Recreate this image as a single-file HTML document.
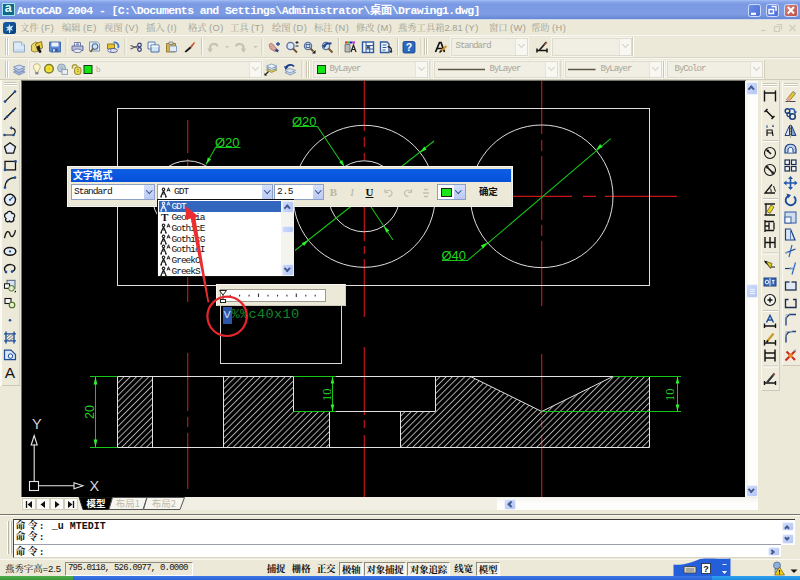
<!DOCTYPE html>
<html lang="zh">
<head>
<meta charset="utf-8">
<title>AutoCAD 2004</title>
<style>
*{box-sizing:border-box;margin:0;padding:0}
html,body{width:800px;height:580px;overflow:hidden;background:#ece9d8}
body{position:relative;font-family:"Liberation Mono","Noto Sans CJK SC",monospace;font-size:11px;color:#000}
.abs{position:absolute}
.mono{font-family:"Liberation Mono","Noto Sans CJK SC",monospace}
.sans{font-family:"Liberation Sans","Noto Sans CJK SC",sans-serif}

#title{left:0;top:0;width:800px;height:20px;background:linear-gradient(#a5bdf3 0,#8dabec 1.5px,#7a99e2 4px,#7c9be4 9px,#7d9ce5 14px,#7190db 17px,#6484d3 19.2px,#f6f5ef 19.6px,#f6f5ef 20px)}
#title .t{left:17px;top:3.5px;color:#fff;font-weight:bold;font-size:11.5px;letter-spacing:-.6px;white-space:pre;line-height:14px}
#menu{left:0;top:20px;width:800px;height:15px;background:#ece9d8}
#menu span i{font-style:normal;margin-left:2.5px;letter-spacing:.4px}
#menu span{font-family:"Liberation Sans","Noto Serif CJK SC",sans-serif;position:absolute;top:0;color:#a3a092;font-size:9.3px;white-space:pre;line-height:15px;letter-spacing:0;top:.5px}
.combo{position:absolute;height:17.5px;background:#f1efe3;border:1px solid #dddbce;box-shadow:0 0 0 1px #f6f5ee;font-size:9px;color:#a8a598;line-height:15px;white-space:pre;letter-spacing:-1px;font-family:"Liberation Mono","Noto Sans CJK SC",monospace}
.combo i{position:absolute;right:0;top:0;width:12px;height:100%;background:#f8f7f1;border-left:1px solid #e6e4d8}
.combo i:after{content:"";position:absolute;left:3px;top:3px;width:4px;height:4px;border-right:1.3px solid #d2d0c4;border-bottom:1.3px solid #d2d0c4;transform:rotate(45deg)}

#canvas{left:20.5px;top:80px;width:725px;height:417.5px;background:#000;border-left:1px solid #77756a;border-top:1px solid #77756a}

.vsb{left:745px;top:81px;width:13px;height:416px;background:linear-gradient(90deg,#f3f2ec,#fefefd 40%,#fdfdfb)}
.sb2 .chev,.sbtn .chev{border-right-width:2.1px;border-bottom-width:2.1px;border-color:#455a92}
.sb2{position:absolute;background:linear-gradient(135deg,#d0dcfb,#b5c6f2);border:1px solid #eef2fd;border-radius:2px}

.stb{position:absolute;top:562px;height:14px;font-family:"Liberation Sans","Noto Serif CJK SC",sans-serif;font-weight:bold;font-size:9.5px;line-height:13px;color:#111;white-space:pre;text-align:center;letter-spacing:-.3px}
.stb.on{border:1px solid #8d8a7c;border-right-color:#fff;border-bottom-color:#fff;background:#f3f1e6}
.cmdl{position:absolute;left:15.5px;font-size:10px;font-weight:bold;line-height:11px;letter-spacing:0;white-space:pre;color:#111;font-family:"Liberation Mono","Noto Sans CJK SC",monospace}
.cmdl b{font-family:"Liberation Serif","Noto Serif CJK SC",serif;font-weight:bold;font-size:10px;letter-spacing:2.3px}

#dlg{left:67px;top:166px;width:446px;height:41px;background:#ece9d8;border:1px solid #f6f5ef;box-shadow:inset 0 0 0 1px #e4e1d2}
#dlg .ttl{left:3px;top:2px;width:440px;height:13px;background:linear-gradient(#0d5fe6,#0650d8)}
#dlg .ttl b{position:absolute;left:2px;top:0;color:#fff;font-size:10px;line-height:13px;font-family:"Liberation Sans","Noto Sans CJK SC",sans-serif;font-weight:bold;letter-spacing:-.2px}
.xcb{position:absolute;top:17px;height:16px;background:#fff;border:1px solid #8ba0c4;font-size:9.5px;line-height:14px;letter-spacing:-1px;white-space:pre;color:#111}
.xcb u{position:absolute;right:0;top:0;width:10px;height:14px;background:linear-gradient(#d5e0fb,#b9c9f3);border-radius:1px;text-decoration:none}
.chev{position:absolute;width:4.5px;height:4.5px;border-right:1.6px solid #3a4f8c;border-bottom:1.6px solid #3a4f8c;transform:rotate(45deg)}
.xcb u .chev{left:2.5px;top:2.5px}
#lst{left:157px;top:199px;width:137px;height:78px;background:#fff;border:1px solid #111;font-size:9.5px;letter-spacing:-1px;color:#111}
#lst .it{position:absolute;left:1px;width:122px;height:11px;line-height:11px;white-space:pre;padding-left:12.5px}
#lst .sel{background:#3267bd;color:#fff}
.sbtn{position:absolute;background:linear-gradient(90deg,#cbd8fa,#b7c8f4);border:1px solid #e8eefc;border-radius:2px}
</style>
</head>
<body>
<!-- TITLE BAR -->
<div id="title" class="abs">
<div class="abs sans" style="left:1.5px;top:3px;width:13.5px;height:12.500px;background:#0f6a88;border:1px solid #a6e2f0;color:#e8fbff;font-weight:bold;font-size:12.500px;line-height:8.500px;text-align:center">a</div>
<div class="abs t mono">AutoCAD 2004 - [C:\Documents and Settings\Administrator\桌面\Drawing1.dwg]</div>
<div class="abs" style="left:747.5px;top:3.5px;width:13.5px;height:13.5px;border-radius:2.5px;border:1px solid #cfdcf8;background:linear-gradient(135deg,#6a8de8,#4a70d6)"></div><div class="abs" style="left:765.5px;top:3.5px;width:13.5px;height:13.5px;border-radius:2.5px;border:1px solid #cfdcf8;background:linear-gradient(135deg,#6a8de8,#4a70d6)"></div><div class="abs" style="left:784px;top:3.5px;width:13.5px;height:13.5px;border-radius:2.5px;border:1px solid #cfdcf8;background:linear-gradient(135deg,#d3827a,#bd5045)"></div><svg class="abs" style="left:747px;top:2px" width="53" height="16" viewBox="0 0 53 16" fill="none" stroke="#fff"><path d="M4 11.800H9" stroke-width="2.200"/><path d="M24.500 4.500H29V9M22 7.500H26.500V11.500H22Z" stroke-width="1.400"/><path d="M40.800 5L47 11.500M47 5L40.800 11.500" stroke-width="2"/></svg>
</div>
<!-- MENU BAR -->
<div id="menu" class="abs">
<div class="abs" style="left:3px;top:1.500px;width:12.500px;height:12px;border-radius:2.500px;background:linear-gradient(135deg,#1560a8,#0a3f7c)"></div><svg class="abs" style="left:3px;top:1.500px" width="13" height="12" viewBox="0 0 13 12"><path d="M6.200 2L7.500 4.500L10.500 3.500L8.500 6.500L10 8.500L7.500 8L7 11H6L5.800 8L3 9L4.800 6.500L2.500 5L5.500 4.800Z" fill="#bfe6fb"/></svg>
<span style="left:20px">文件<i>(F)</i></span><span style="left:62px">编辑<i>(E)</i></span><span style="left:104px">视图<i>(V)</i></span><span style="left:146px">插入<i>(I)</i></span><span style="left:188px">格式<i>(O)</i></span><span style="left:230px">工具<i>(T)</i></span><span style="left:272px">绘图<i>(D)</i></span><span style="left:314px">标注<i>(N)</i></span><span style="left:356px">修改<i>(M)</i></span><span style="left:398px">燕秀工具箱2.81<i>(Y)</i></span><span style="left:489px">窗口<i>(W)</i></span><span style="left:531px">帮助<i>(H)</i></span><svg class="abs" style="left:755px;top:1px" width="45" height="13" viewBox="0 0 45 13" fill="none" stroke="#cfccbe" stroke-width="1.2"><path d="M6 9.500H10.500"/><path d="M21.500 3.500H26.500V8.500M19.500 5.500H24.500V10.500H19.500Z"/><path d="M34.500 4L40.500 10M40.500 4L34.500 10"/></svg>
</div>
<!-- HORIZONTAL TOOLBARS -->
<div class="abs" style="left:0;top:35px;width:800px;height:1px;background:#f8f7f1"></div><div class="abs" style="left:0;top:57px;width:800px;height:1px;background:#d9d6c6"></div><div class="abs" style="left:0;top:58px;width:800px;height:1px;background:#f8f7f1"></div><div class="abs" style="left:0;top:79px;width:800px;height:1px;background:#cfccbc"></div><div class="combo" style="left:450.5px;top:38px;width:77px;padding-left:4px">Standard<i></i></div><div class="combo" style="left:551.5px;top:38px;width:80px;padding-left:4px"><i></i></div><div class="combo" style="left:28.5px;top:60.5px;width:233px;padding-left:4px"><i></i></div><div class="combo" style="left:312.5px;top:60.5px;width:115px;padding-left:16px">ByLayer<i></i></div><div class="combo" style="left:433.5px;top:60.5px;width:124px;padding-left:55px">ByLayer<i></i></div><div class="combo" style="left:564.5px;top:60.5px;width:97px;padding-left:35px">ByLayer<i></i></div><div class="combo" style="left:666.5px;top:60.5px;width:96px;padding-left:7px">ByColor<i></i></div><div class="abs mono" style="left:96px;top:63px;font-size:9px;line-height:13px;color:#b4b1a3;font-family:'Liberation Serif',serif">b</div><svg class="abs" style="left:0;top:35px" width="800" height="45" viewBox="0 35 800 45">
<path d="M5.5 38v17M7.5 38v17" stroke="#c9c6b6" stroke-width="1"/><path d="M6.5 38v17M8.5 38v17" stroke="#fff" stroke-width="1"/><path d="M5.5 61v17M7.5 61v17" stroke="#c9c6b6" stroke-width="1"/><path d="M6.5 61v17M8.5 61v17" stroke="#fff" stroke-width="1"/><g transform="translate(12.5 41)"><path d="M1 1H9L12 4V11H1Z" fill="#dbeaf6" stroke="#8fa7c4" stroke-width="1"/><path d="M9 1V4H12" fill="#f4f9fd" stroke="#8fa7c4" stroke-width=".8"/><path d="M2 8H11V10.500H2Z" fill="#bcd3e8" opacity=".6"/></g><g transform="translate(30.5 41)"><path d="M1 4L5 1L8 2V10L4 11L1 10Z" fill="#e8d66a" stroke="#8e7d2c" stroke-width=".9"/><path d="M5 3L11 0.500L12 7L7 9Z" fill="#f0cf3c" stroke="#7a6a22" stroke-width=".9"/><path d="M6 6L9 4L10 9L7.500 10.500Z" fill="#222"/><circle cx="9.500" cy="10.500" r="1.400" fill="#111"/></g><g transform="translate(48.5 41)"><path d="M1 1H12V11H2L1 10Z" fill="#5b8ad6" stroke="#3a61a8" stroke-width=".9"/><rect x="3" y="1.500" width="7" height="4" fill="#eef3fb"/><rect x="3.500" y="7.500" width="6" height="3.500" fill="#3a61a8"/><rect x="4.500" y="8.200" width="1.800" height="2.300" fill="#dfe8f6"/></g><path d="M66.0 38v17" stroke="#cbc8b8" stroke-width="1"/><path d="M67.0 38v17" stroke="#fbfaf5" stroke-width="1"/><g transform="translate(71 41)"><path d="M3.500 5V1.500H9.500V5" fill="#f5f7fb" stroke="#6570a0" stroke-width=".9"/><path d="M1 5H12V9.500H1Z" fill="#b9c0dc" stroke="#555f93" stroke-width=".9"/><ellipse cx="6.500" cy="9.800" rx="4" ry="1.800" fill="#eceff8" stroke="#555f93" stroke-width=".8"/><circle cx="6.500" cy="3.500" r="1.600" fill="#8d96c2"/></g><g transform="translate(88.5 41)"><path d="M1 1H9L11 3V10H1Z" fill="#e4eef8" stroke="#6f8cb4" stroke-width=".9"/><circle cx="6.500" cy="5.500" r="2.800" fill="#cfe2f4" stroke="#4f6c98" stroke-width="1.100"/><path d="M4.500 7.500L2 11" stroke="#7a5a30" stroke-width="1.600"/></g><g transform="translate(106.5 41)"><path d="M1 3H8V8H1Z" fill="#e6c52c" stroke="#7f6d1c" stroke-width=".9"/><path d="M7 1.500C11 1 13 4 11.500 7" fill="none" stroke="#3e78c6" stroke-width="1.800"/><ellipse cx="6.500" cy="9.500" rx="4.500" ry="2" fill="#dfe4f3" stroke="#4d5a92" stroke-width=".9"/><circle cx="3" cy="9.500" r="1.500" fill="#f3f5fb" stroke="#4d5a92" stroke-width=".7"/></g><path d="M125.0 38v17" stroke="#cbc8b8" stroke-width="1"/><path d="M126.0 38v17" stroke="#fbfaf5" stroke-width="1"/><g transform="translate(129.5 41)"><path d="M1 4.500L8 7M1 8L8 5" stroke="#556" stroke-width="1.100"/><circle cx="10" cy="4" r="1.800" fill="none" stroke="#2d3a7c" stroke-width="1.200"/><circle cx="10" cy="8.500" r="1.800" fill="none" stroke="#2d3a7c" stroke-width="1.200"/></g><g transform="translate(147 41)"><path d="M1 1H8V8H1Z" fill="#eef4fa" stroke="#5b7fb4" stroke-width="1"/><path d="M4 4H12V11H4Z" fill="#d4e4f3" stroke="#4a6fa8" stroke-width="1"/><path d="M4.500 4.500H11.500V6H4.500Z" fill="#f6fafd"/></g><g transform="translate(165 41)"><path d="M1.500 2.500H10.500V11H1.500Z" fill="#d8b24c" stroke="#8e7430" stroke-width=".9"/><path d="M4 1H8V3.500H4Z" fill="#cfd3da" stroke="#777" stroke-width=".7"/><path d="M4.500 5H11.500V10.500H4.500Z" fill="#e2ecf6" stroke="#6f8cb4" stroke-width=".8"/></g><g transform="translate(183.5 41)"><path d="M1 10.500L6.500 5.500L8 7L2.500 11.500Z" fill="#1a1a1a"/><path d="M6.500 5.500L10.500 1L11.500 2L8 7Z" fill="#c9573b"/><path d="M10.500 1L11.500 2L12 0.500Z" fill="#e0a080"/></g><path d="M201.5 38v17" stroke="#cbc8b8" stroke-width="1"/><path d="M202.5 38v17" stroke="#fbfaf5" stroke-width="1"/><g transform="translate(207 41)"><path d="M3 10.500V6.500C3 2.500 9.500 1.500 10.500 5.500" fill="none" stroke="#c6c3b5" stroke-width="2.200"/><path d="M0.200 7.500H5.800L3 11.500Z" fill="#c6c3b5"/></g><g transform="translate(233.5 41)"><path d="M10 10.500V6.500C10 2.500 3.500 1.500 2.500 5.500" fill="none" stroke="#c6c3b5" stroke-width="2.200"/><path d="M7.200 7.500H12.800L10 11.500Z" fill="#c6c3b5"/></g><path d="M262.0 38v17" stroke="#cbc8b8" stroke-width="1"/><path d="M263.0 38v17" stroke="#fbfaf5" stroke-width="1"/><g transform="translate(267.5 41)"><path d="M2 5C1 3 3 1.500 5 3L9 7.500C10 9 8 11 6.500 10L3 8Z" fill="#d8a59a" stroke="#a06a62" stroke-width=".8"/><path d="M7 9.500L10 11.500L11.500 9.500L9 7.500Z" fill="#3a4a8c"/><path d="M10.500 1v4M8.500 3h4" stroke="#2d4a9a" stroke-width="1.300"/></g><g transform="translate(285.5 41)"><circle cx="5" cy="5" r="3.600" fill="#dbe9f6" stroke="#5a6f9c" stroke-width="1.300"/><path d="M7.500 7.500L11.500 11.500" stroke="#6d5230" stroke-width="1.800"/><path d="M10 1.500h3M11.500 0v3M10 5h3" stroke="#223" stroke-width="1"/></g><g transform="translate(303 41)"><circle cx="5" cy="5" r="3.600" fill="#cfe0f2" stroke="#5a6f9c" stroke-width="1.300"/><rect x="3.200" y="3.500" width="3.600" height="3" fill="none" stroke="#35507f" stroke-width=".8"/><path d="M7.500 7.500L10.500 10.500" stroke="#6d5230" stroke-width="1.800"/><path d="M12.500 9V12.500H9Z" fill="#111"/></g><g transform="translate(321 41)"><circle cx="5" cy="5" r="3.600" fill="#d8e6f4" stroke="#5a6f9c" stroke-width="1.300"/><path d="M7.500 7.500L11.500 11.500" stroke="#6d5230" stroke-width="1.800"/><path d="M3 5.500C4 2.500 8 2 10.500 2.500" fill="none" stroke="#20408c" stroke-width="1.800"/><path d="M1.500 4L5.500 4.500L3 7.500Z" fill="#20408c"/></g><path d="M338.5 38v17" stroke="#cbc8b8" stroke-width="1"/><path d="M339.5 38v17" stroke="#fbfaf5" stroke-width="1"/><g transform="translate(344 41)"><rect x="1" y="0.500" width="2.500" height="2" fill="#d22"/><rect x="3.500" y="0.500" width="2.500" height="2" fill="#2a2"/><rect x="6" y="0.500" width="2.500" height="2" fill="#22c"/><rect x="8.500" y="0.500" width="2.500" height="2" fill="#c2c"/><path d="M1 3.500H6V11H1Z" fill="#b8b8b8" stroke="#666" stroke-width=".8"/><path d="M7 11L9.500 4L12 11M8 8.500H11" fill="none" stroke="#222" stroke-width="1.200"/></g><g transform="translate(361.5 41)"><rect x="1" y="1" width="11" height="10.500" fill="#f4f8fc" stroke="#2e5a9c" stroke-width="1.400"/><path d="M4.500 1V11.500M4.500 4.500H12M4.500 8H12M8.200 4.500V11.500" stroke="#2e5a9c" stroke-width="1"/><rect x="5.200" y="5.200" width="2.400" height="2.200" fill="#345"/></g><g transform="translate(379.5 41)"><path d="M1 1H7.500L9.500 3V11.500H1Z" fill="#f2f6fb" stroke="#2e5a9c" stroke-width="1.300"/><path d="M3 4H7M3 6.500H7M3 9H6" stroke="#2e5a9c" stroke-width="1"/><path d="M8 6C10 5 12 7 12 9.500" fill="none" stroke="#223" stroke-width="1.300"/><circle cx="11.500" cy="10.500" r="1.200" fill="#223"/></g><path d="M397.5 38v17" stroke="#cbc8b8" stroke-width="1"/><path d="M398.5 38v17" stroke="#fbfaf5" stroke-width="1"/><g transform="translate(402.5 41)"><rect x="0.500" y="0.500" width="12" height="11.500" rx="1.500" fill="#2c67c0" stroke="#173f86" stroke-width=".8"/><text x="6.500" y="10" text-anchor="middle" font-family="Liberation Sans, sans-serif" font-weight="bold" font-size="10.500" fill="#fff">?</text></g><path d="M421.0 38v17" stroke="#cbc8b8" stroke-width="1"/><path d="M422.0 38v17" stroke="#fbfaf5" stroke-width="1"/><g transform="translate(225 46)"><path d="M0 0H4L2 2.200Z" fill="#c6c3b5"/></g><g transform="translate(253.5 46)"><path d="M0 0H4L2 2.200Z" fill="#c6c3b5"/></g><path d="M424.5 38v17M426.5 38v17" stroke="#c9c6b6" stroke-width="1"/><path d="M425.5 38v17M427.5 38v17" stroke="#fff" stroke-width="1"/><g transform="translate(434.5 41)"><path d="M1 11L5 1.500H6.500L10 11M3 7.500H8.500" fill="none" stroke="#111" stroke-width="1.700"/><path d="M6 10.500L12 5" stroke="#c8962c" stroke-width="1.800"/><path d="M5 11.500L7 9.500" stroke="#111" stroke-width="1.500"/></g><g transform="translate(535.5 41)"><path d="M1 9.500H12M1.500 7.500V11.500M11.500 7.500V11.500" stroke="#111" stroke-width="1.500"/><path d="M4 9L11 1" stroke="#222" stroke-width="1.800"/><path d="M8 4.500L11 1L11.800 2Z" fill="#c86c4c"/></g><path d="M632.500 37V56" stroke="#d2cfbf"/><path d="M633.500 37V56" stroke="#fff"/><g transform="translate(12.5 63.5)"><path d="M1 8.500L6.500 6.500L12.500 8.500L6.500 11.500Z" fill="#9fb2d8" stroke="#7088b8" stroke-width=".8"/><path d="M1 6L6.500 4L12.500 6L6.500 9Z" fill="#b4c4e2" stroke="#7088b8" stroke-width=".8"/><path d="M1 3.500L6.500 1.500L12.500 3.500L6.500 6.500Z" fill="#cfdaee" stroke="#7088b8" stroke-width=".8"/></g><g transform="translate(33 63.5)"><path d="M3.800 0.300C-0.400 0.300 -0.200 5 2.300 7V8.800H5.300V7C7.800 5 8 0.300 3.800 0.300Z" fill="#fdf8c4" stroke="#a8a070" stroke-width=".8"/><path d="M2.300 8.800H5.300V10.800H2.300Z" fill="#7c7a90"/></g><g transform="translate(44 63.5)"><circle cx="5" cy="5.300" r="4.300" fill="#efe53a" stroke="#7a7e2e" stroke-width="1.500"/><circle cx="5" cy="5.300" r="1.800" fill="#f2d21c"/></g><g transform="translate(57 63.5)"><circle cx="4.500" cy="4.500" r="4" fill="#c9d6e0" stroke="#8094a8" stroke-width=".9"/><path d="M4.500 1V8M1 4.500H8M2 2L7 7M7 2L2 7" stroke="#9fb2c4" stroke-width=".7"/><rect x="5" y="6" width="5.500" height="5" fill="#e9eef4" stroke="#8094a8" stroke-width=".8"/></g><g transform="translate(71 63.5)"><path d="M1.500 5V3C1.500 0.500 6 0.500 6 3" fill="none" stroke="#a89a3a" stroke-width="1.500"/><rect x="3.500" y="3.500" width="6.500" height="7.500" rx="2.500" fill="#e6d84c" stroke="#8c8030" stroke-width=".9"/><path d="M6 6H8M6 8H8" stroke="#a89a3a" stroke-width=".8"/></g><g transform="translate(83.5 65)"><rect x="0.500" y="0.500" width="8" height="8" fill="#12e612" stroke="#143c14" stroke-width="1"/></g><g transform="translate(264.5 63.5)"><path d="M2 6.500L7 4.500L12.500 6.500L7 9Z" fill="#e0cf4c" stroke="#8a7c30" stroke-width=".7"/><path d="M2 4.500L7 2.500L12.500 4.500L7 7Z" fill="#d5e1ee" stroke="#6a86b0" stroke-width=".7"/><path d="M2 2.500L7 0.500L12.500 2.500L7 5Z" fill="#e8f0f8" stroke="#6a86b0" stroke-width=".7"/><path d="M0.500 11.500L4 8" stroke="#222" stroke-width="1.300"/><path d="M0 12V9.500L2.500 12Z" fill="#111"/></g><g transform="translate(283 63.5)"><path d="M2 9L7 7L12.500 9L7 11.500Z" fill="#cfdcec" stroke="#6a86b0" stroke-width=".7"/><path d="M2 7L7 5L12.500 7L7 9.500Z" fill="#dbe6f2" stroke="#6a86b0" stroke-width=".7"/><path d="M3 4.500C4 1 9 0.500 11 3" fill="none" stroke="#1d3f8f" stroke-width="1.900"/><path d="M1 2.500L5.500 3.500L2.500 6.500Z" fill="#1d3f8f"/></g><path d="M302.0 61v17" stroke="#cbc8b8" stroke-width="1"/><path d="M303.0 61v17" stroke="#fbfaf5" stroke-width="1"/><path d="M306.5 61v17M308.5 61v17" stroke="#c9c6b6" stroke-width="1"/><path d="M307.5 61v17M309.5 61v17" stroke="#fff" stroke-width="1"/><g transform="translate(317 65)"><rect x="0.500" y="0.500" width="8" height="8" fill="#12e612" stroke="#143c14" stroke-width="1"/></g><path d="M438 69.500H485M568 69.500H595.500" stroke="#5d5543" stroke-width="1.500"/><path d="M430.0 61v17" stroke="#cbc8b8" stroke-width="1"/><path d="M431.0 61v17" stroke="#fbfaf5" stroke-width="1"/><path d="M561.0 61v17" stroke="#cbc8b8" stroke-width="1"/><path d="M562.0 61v17" stroke="#fbfaf5" stroke-width="1"/><path d="M663.5 61v17" stroke="#cbc8b8" stroke-width="1"/><path d="M664.5 61v17" stroke="#fbfaf5" stroke-width="1"/><path d="M764.500 60V79" stroke="#d2cfbf"/></svg>
<!-- DRAWING CANVAS -->
<div id="canvas" class="abs"></div>
<svg class="abs" id="dwg" style="left:0;top:0" width="800" height="580" viewBox="0 0 800 580">
<defs>
<pattern id="hatch" width="4.38" height="10" patternUnits="userSpaceOnUse" patternTransform="translate(118 376) rotate(45)"><line x1="0.5" y1="0" x2="0.5" y2="10" stroke="#dcdcdc" stroke-width="0.8"/></pattern>
<clipPath id="cv"><rect x="21.5" y="81" width="723.500" height="416.500"/></clipPath>
</defs>
<g clip-path="url(#cv)" fill="none" stroke-width="1">
<g stroke="#c9151a" stroke-width="1.15">
<path d="M187.7 120V153M187.7 159V168M187.7 277V302M187.7 353V411M187.7 417V427M187.7 433V489"/>
<path d="M364.3 80V131M364.3 137V147M364.3 153V160M364.3 207V241M364.3 246V254M364.3 259V317M364.3 347V415M364.3 420V428M364.3 435V497"/>
<path d="M541.7 80V134M541.7 140V151M541.7 156V220M541.7 225V236M541.7 241V306M541.7 354V415M541.7 420V428M541.7 435V497"/>
<path d="M436 196.3H470M478 196.3H488M494 196.3H572M583 196.3H596M605 196.3H677"/>
</g>
<g stroke="#dedede">
<rect x="117.5" y="108.5" width="532" height="177"/>
<circle cx="187.7" cy="196.3" r="35.5"/><circle cx="364.2" cy="196.3" r="35.5"/><circle cx="364.2" cy="196.3" r="71"/><circle cx="541.7" cy="196.3" r="71.3"/>
</g>
<g fill="url(#hatch)" stroke="none">
<rect x="117" y="377" width="35" height="70"/>
<path d="M223 377H293.500V411.500H329V447H223Z"/>
<path d="M400 447V411.500H435.500V377H470.500L541.700 411.500L613 377H649V447Z"/>
</g>
<g stroke="#e2e2e2">
<path d="M117.500 376.500H649.500V447.500H117.500Z"/>
<path d="M152.500 376.500V447.500M223.500 376.500V447.500"/>
<path d="M293.500 376.500V411.500H435.500V376.500M329.500 411.500V447.500M400.500 411.500V447.500"/>
<path d="M470.500 376.500L541.700 411.500L613 376.500"/>
</g>
<g stroke="#19c419" stroke-width="1.05">
<path d="M90 376.500H117M90 447.500H117M95.500 376.500V447.500"/>
<path d="M293.500 376.500H336M293.500 411.500H336M332.500 376.500V411.500"/>
<path d="M613 376.500H681M541.700 411.500H681M677.500 376.500V411.500"/>
<path d="M215.500 147.500H240.500M215.500 147.500L206 164.500"/>
<path d="M292.500 126.500H317.500L393 240"/>
<path d="M295 250.500L434 141"/>
<path d="M442 260.500H467.500L610.700 138.600"/>
</g>
<g fill="#2cf02c" stroke="none">
<path d="M95.500 376.500l-1.800 8h3.600zM95.500 447.500l-1.800 -8h3.600z"/>
<path d="M332.500 376.500l-1.800 7h3.600zM332.500 411.500l-1.800 -7h3.600z"/>
<path d="M677.500 376.500l-1.800 7h3.600zM677.500 411.500l-1.800 -7h3.600z"/>
<path d="M344.5 166.7L342.2 159.9L339.1 162.0ZM383.9 225.9L386.2 232.7L389.3 230.6ZM308.4 240.2L301.8 243.1L304.1 246.1ZM420.0 152.4L426.6 149.5L424.3 146.5ZM487.4 242.5L480.8 245.6L483.3 248.5ZM596.0 150.1L602.6 147.0L600.1 144.1ZM206.0 164.5L211.1 159.3L207.8 157.5Z"/>
</g>
<g fill="#1fd51f" stroke="none" font-family="Liberation Sans, sans-serif" font-size="13">
<text x="215" y="146.500">Ø20</text>
<text x="292" y="125.500">Ø20</text>
<text x="441.500" y="259.500">Ø40</text>
<text transform="translate(94 419) rotate(-90)" font-size="12.5">20</text>
<text transform="translate(331 401) rotate(-90)" font-family="Liberation Serif, serif" font-size="12.5">10</text>
<text transform="translate(674 401) rotate(-90)" font-family="Liberation Serif, serif" font-size="12.5">10</text>
</g>
</g>
<g stroke="#e6e6e6" fill="none" stroke-width="1.1">
<rect x="29.5" y="481.500" width="9" height="9"/>
<path d="M34.200 481.500V444.500M38.500 485.800H74"/>
<path d="M34.200 435.500L31.200 445H37.200Z"/>
<path d="M83 485.800L74 482.800V488.800Z"/>
</g>
<g fill="#d6d6d6" font-family="Liberation Sans, sans-serif" font-size="14.5">
<text x="32" y="429.300">Y</text>
<text x="89.500" y="490.800">X</text>
</g>
</svg>
<!-- LEFT DRAW TOOLBAR -->
<div class="abs" style="left:0;top:80px;width:21px;height:430px;background:#ece9d8"></div><div class="abs" style="left:0;top:80px;width:2px;height:306px;background:#faf9f4"></div><div class="abs" style="left:19px;top:81px;width:1px;height:304px;background:#d6d3c3"></div><div class="abs" style="left:2px;top:385px;width:18px;height:1px;background:#cbc8b8"></div><svg class="abs" style="left:0;top:80px" width="21" height="310" viewBox="0 80 21 310">
<path d="M4 82.5h13M4 84.5h13" stroke="#c9c6b6"/><path d="M4 83.5h13M4 85.5h13" stroke="#fff"/><g transform="translate(3.0 89.6)"><path d="M2 12L12 2" stroke="#141414" stroke-width="1.300"/><circle cx="2" cy="12" r="1.300" fill="#1d4f9c"/><circle cx="12" cy="2" r="1.300" fill="#1d4f9c"/></g><g transform="translate(3.0 106.8)"><path d="M1 13L13 1" stroke="#141414" stroke-width="1.500"/><circle cx="4" cy="10" r="1.300" fill="#1d4f9c"/><circle cx="10" cy="4" r="1.300" fill="#1d4f9c"/></g><g transform="translate(3.0 124.0)"><path d="M1.500 11H10.500C13 9 13 5 9 4" fill="none" stroke="#141414" stroke-width="1.200"/><circle cx="1.500" cy="11" r="1.300" fill="#1d4f9c"/><circle cx="10.500" cy="11" r="1.300" fill="#1d4f9c"/><path d="M9 2V6L6.500 4Z" fill="#1d4f9c"/></g><g transform="translate(3.0 141.2)"><path d="M7 1.500L12.500 5.500L10.500 12H3.500L1.500 5.500Z" fill="#e8eef8" stroke="#141414" stroke-width="1.300"/></g><g transform="translate(3.0 158.4)"><rect x="2" y="3" width="10.500" height="8.500" fill="none" stroke="#141414" stroke-width="1.300"/><circle cx="2" cy="11.500" r="1.300" fill="#1d4f9c"/><circle cx="12.500" cy="3" r="1.300" fill="#1d4f9c"/></g><g transform="translate(3.0 175.6)"><path d="M2 12C2 6 6 2 12 2" fill="none" stroke="#141414" stroke-width="1.300"/><circle cx="2" cy="12" r="1.300" fill="#1d4f9c"/><circle cx="12" cy="2" r="1.300" fill="#1d4f9c"/><circle cx="4.500" cy="5" r="1.100" fill="#1d4f9c"/></g><g transform="translate(3.0 192.8)"><circle cx="7" cy="7" r="5.500" fill="#e4ecf6" stroke="#141414" stroke-width="1.400"/><path d="M7 7L10.500 3.500" stroke="#1d4f9c" stroke-width="1.200"/><circle cx="7" cy="7" r="1.100" fill="#1d4f9c"/></g><g transform="translate(3.0 210.0)"><path d="M4 3C5 0.500 9 1 9 3.500C12 3 12.500 7 10.500 8C12 11 8 13 6.500 11C4 13 1.500 10.500 3 8.500C0.500 7 1.500 3 4 3Z" fill="#e6edf6" stroke="#141414" stroke-width="1.300"/></g><g transform="translate(3.0 227.2)"><path d="M1.500 11C3 3 6 3 7 7C8 11 11 10 12.500 3" fill="none" stroke="#141414" stroke-width="1.300"/></g><g transform="translate(3.0 244.4)"><ellipse cx="7" cy="7" rx="5.800" ry="3.800" fill="#e4ecf6" stroke="#141414" stroke-width="1.500"/><circle cx="7" cy="7" r="1.100" fill="#1d4f9c"/></g><g transform="translate(3.0 261.6)"><path d="M3 10.500C-1 6 4 2.500 8 3C13 3.500 13 9 9 10" fill="none" stroke="#141414" stroke-width="1.400"/><circle cx="3" cy="10.500" r="1.300" fill="#1d4f9c"/><circle cx="9" cy="10" r="1.300" fill="#1d4f9c"/></g><g transform="translate(3.0 278.8)"><rect x="4" y="1.500" width="8" height="8" fill="#d6e2f2" stroke="#456" stroke-width=".9"/><rect x="1.500" y="5" width="5" height="4.500" fill="#f4f7fb" stroke="#141414" stroke-width="1"/><circle cx="8.500" cy="9.500" r="2.800" fill="#e4ecd0" stroke="#4a6a1c" stroke-width="1"/><path d="M13 11.500V13.500H11Z" fill="#141414"/></g><g transform="translate(3.0 296.0)"><rect x="2" y="2.500" width="6" height="5" fill="#f4f7fb" stroke="#141414" stroke-width="1.100"/><circle cx="9" cy="9" r="2.800" fill="#e4ecd0" stroke="#4a6a1c" stroke-width="1.100"/></g><g transform="translate(3.0 313.2)"><circle cx="7" cy="7" r="1.300" fill="#1d4f9c"/></g><g transform="translate(3.0 330.4)"><path d="M3 1V13M11 1V13M1 3.500H13M1 10.500H13" stroke="#1d4f9c" stroke-width="1.400"/><path d="M4 9.500L10 4.500M4 6.500L7 4M7 10L10 7.500" stroke="#456" stroke-width=".7"/></g><g transform="translate(3.0 347.6)"><path d="M1.500 2.500H8L12.500 7V12H1.500Z" fill="#dbe5f3" stroke="#1d4f9c" stroke-width="1.200"/><circle cx="7.500" cy="8.500" r="2.200" fill="#f6f8fb" stroke="#1d4f9c" stroke-width="1"/></g><g transform="translate(3.0 364.8)"><text x="7" y="13" text-anchor="middle" font-family="Liberation Sans, sans-serif" font-size="15.500" fill="#141414">A</text></g></svg>
<!-- VERTICAL SCROLLBAR -->
<div class="abs vsb"></div>
<div class="sb2" style="left:745.5px;top:82px;width:12px;height:12.500px"><div class="chev" style="left:2.700px;top:4px;transform:rotate(-135deg)"></div></div><div class="sb2" style="left:745.5px;top:484.500px;width:12px;height:12px"><div class="chev" style="left:2.700px;top:1px"></div></div><div class="sb2" style="left:745.5px;top:283.500px;width:12px;height:14px"><div class="abs" style="left:3px;top:4px;width:5px;height:5px;border-top:1px solid #eef3ff;border-bottom:1px solid #eef3ff"><div class="abs" style="left:0;top:1px;width:5px;height:1px;background:#eef3ff"></div></div></div>
<!-- RIGHT TOOLBARS (DIMENSION / MODIFY) -->
<div class="abs" style="left:758px;top:80px;width:42px;height:430px;background:#ece9d8"></div><div class="abs" style="left:761px;top:81px;width:19px;height:310px;background:#efecdd;border-left:1px solid #faf9f4;border-right:1px solid #d2cfbf;border-bottom:1px solid #cbc8b8"></div><div class="abs" style="left:781.500px;top:81px;width:19px;height:285px;background:#efecdd;border-left:1px solid #faf9f4;border-bottom:1px solid #cbc8b8"></div><svg class="abs" style="left:758px;top:80px" width="42" height="315" viewBox="758 80 42 315">
<path d="M763 83.5h14M763 85.5h14" stroke="#c9c6b6"/><path d="M763 84.5h14M763 86.5h14" stroke="#fff"/><path d="M784 83.5h14M784 85.5h14" stroke="#c9c6b6"/><path d="M784 84.5h14M784 86.5h14" stroke="#fff"/><g transform="translate(763.0 89.5)"><path d="M1.500 1V12M12.500 1V12M1.500 3.500H12.500" stroke="#141414" stroke-width="1.400"/></g><g transform="translate(763.0 106.5)"><path d="M3 4L10 11M1.500 5.500L4.500 2.500M8.500 12.500L11.500 9.500" stroke="#141414" stroke-width="1.500"/></g><g transform="translate(763.0 124.0)"><path d="M4 12V6H9L10 12M4 9H9" fill="none" stroke="#141414" stroke-width="1.200"/><path d="M3 3H5M9 2.500H11" stroke="#456" stroke-width="1.200"/><circle cx="4" cy="2" r=".9" fill="#7a8fc0"/><circle cx="10" cy="1.500" r=".9" fill="#7a8fc0"/></g><path d="M763 140.5h15" stroke="#c9c6b6"/><path d="M763 141.5h15" stroke="#fff"/><g transform="translate(763.0 146.0)"><circle cx="7" cy="7" r="5.500" fill="none" stroke="#141414" stroke-width="1.100"/><path d="M8 8L4.500 4.500" stroke="#141414" stroke-width="1.500"/><path d="M3 3L6.200 4L4 6.200Z" fill="#141414"/></g><g transform="translate(763.0 163.0)"><circle cx="7" cy="7" r="5.500" fill="none" stroke="#141414" stroke-width="1.100"/><path d="M4 4L10 10" stroke="#141414" stroke-width="1.600"/><path d="M2.800 2.800L6 3.800L3.800 6ZM11.200 11.200L8 10.200L10.200 8Z" fill="#141414"/></g><g transform="translate(763.0 181.5)"><path d="M12 11.500H2L9 3" fill="none" stroke="#141414" stroke-width="1.300"/><path d="M8 11C8.500 9 8 7.500 6.500 6.500" fill="none" stroke="#141414" stroke-width="1"/><path d="M10.500 4.500L12.500 10" stroke="#141414" stroke-width="1"/></g><path d="M763 198.5h15" stroke="#c9c6b6"/><path d="M763 199.5h15" stroke="#fff"/><g transform="translate(763.0 202.5)"><path d="M1.500 1.500H12M1.500 12.500H12M3 1.500V12.500" stroke="#141414" stroke-width="1.300"/><path d="M4 9L8 2.500L11 4.500L7 11Z" fill="#e6d42c" stroke="#6d641c" stroke-width=".8"/></g><g transform="translate(763.0 219.0)"><path d="M2 1V13M6 3.500V10.500M11 3.500V10.500M2 2.500H11M2 7H6M2 11.500H11" stroke="#141414" stroke-width="1.300"/></g><g transform="translate(763.0 235.5)"><path d="M2 1.500V12.500M7 1.500V12.500M12 1.500V12.500M2 7H12" stroke="#141414" stroke-width="1.400"/></g><path d="M763 253.0h15" stroke="#c9c6b6"/><path d="M763 254.0h15" stroke="#fff"/><g transform="translate(763.0 258.5)"><path d="M2 3L7 8.500H12" fill="none" stroke="#141414" stroke-width="1.200"/><path d="M3 3L9 5L7.500 10Z" fill="#e0cf28" stroke="#5d5618" stroke-width=".8"/><path d="M1 2L4.500 3L2.500 5Z" fill="#141414"/></g><g transform="translate(763.0 275.5)"><rect x="1" y="2.500" width="12" height="8" fill="#3c6cb8" stroke="#1c3f80" stroke-width="1"/><path d="M7 2.500V10.500" stroke="#dfe8f6" stroke-width="1"/><circle cx="4" cy="6.500" r="1.800" fill="none" stroke="#fff" stroke-width=".9"/><path d="M9 5H11.500M10.200 5V8.500" stroke="#fff" stroke-width=".9"/></g><g transform="translate(763.0 293.0)"><circle cx="7" cy="7" r="5.500" fill="#f4f4ee" stroke="#141414" stroke-width="1.200"/><path d="M4.500 7H9.500M7 4.500V9.500" stroke="#141414" stroke-width="1.500"/></g><path d="M763 310.5h15" stroke="#c9c6b6"/><path d="M763 311.5h15" stroke="#fff"/><g transform="translate(763.0 314.5)"><path d="M1.500 9V13.500M12.500 9V13.500M1.500 11.500H12.500" stroke="#141414" stroke-width="1.400"/><path d="M3.500 8L7 1L10.500 8M5 5.500H9" fill="none" stroke="#1d4f9c" stroke-width="1.500"/></g><g transform="translate(763.0 332.0)"><path d="M1.500 8V13.500M12.500 8V13.500M1.500 11H12.500" stroke="#141414" stroke-width="1.400"/><path d="M4 9.500L10.500 1.500" stroke="#c89a2c" stroke-width="2.200"/><path d="M3.500 10.500L5 8.500" stroke="#141414" stroke-width="1.500"/></g><g transform="translate(763.0 348.5)"><path d="M2 1V13M12 1V13M2 4.500H12M2 9.500H12" stroke="#141414" stroke-width="1.500"/></g><path d="M763 366.0h15" stroke="#c9c6b6"/><path d="M763 367.0h15" stroke="#fff"/><g transform="translate(763.0 372.0)"><path d="M1 11H13M1.500 9V13M12.500 9V13" stroke="#141414" stroke-width="1.400"/><path d="M4 10.500L11.500 1.500" stroke="#333" stroke-width="2"/><path d="M9.500 4L11.500 1.500L12.300 2.500Z" fill="#c8745c"/></g><g transform="translate(783.5 89.5)"><path d="M2 12H12" stroke="#445" stroke-width="1"/><path d="M3 10L9.500 2L12 4L5.500 12Z" fill="#e6c62c" stroke="#77651c" stroke-width=".7"/><path d="M3 10L5 7.500L7.500 9.500L5.500 12Z" fill="#e8a0a8"/><path d="M9.500 2L12 4" stroke="#8fa0c8" stroke-width="1.500"/></g><g transform="translate(783.5 106.5)"><circle cx="4" cy="4.500" r="2.300" fill="none" stroke="#1c3f80" stroke-width="1.500"/><circle cx="9" cy="10" r="2.800" fill="none" stroke="#1c3f80" stroke-width="1.600"/><circle cx="5.300" cy="8.300" r="1.800" fill="none" stroke="#1c3f80" stroke-width="1.300"/><path d="M6.500 2.500C9.500 1.500 11.500 3 11.500 5.500" fill="none" stroke="#2458b0" stroke-width="1.500"/><path d="M9.800 5H13.500L11.700 7.800Z" fill="#2458b0"/></g><g transform="translate(783.5 124.0)"><path d="M6 1.500V11.500H1.500Z" fill="#dfe8f4" stroke="#1c3f80" stroke-width="1"/><path d="M8 1.500V11.500H12.500Z" fill="#7f9fd0" stroke="#1c3f80" stroke-width="1"/><path d="M7 0.500V13.500" stroke="#333" stroke-width=".7" stroke-dasharray="2 1"/></g><g transform="translate(783.5 141.5)"><path d="M1.500 11.500V8C1.500 1 12.500 1 12.500 8V11.500Z" fill="#bcd0ea" stroke="#1c3f80" stroke-width="1.200"/><path d="M4.500 11V8.500C4.500 5 9.500 5 9.500 8.500V11" fill="#eef3fa" stroke="#1c3f80" stroke-width="1"/></g><g transform="translate(783.5 158.5)"><rect x="1.500" y="1.500" width="4.500" height="4.500" fill="#f2f5fa" stroke="#1c2f50" stroke-width="1.200"/><rect x="8" y="1.500" width="4.500" height="4.500" fill="#f2f5fa" stroke="#1c2f50" stroke-width="1.200"/><rect x="1.500" y="8" width="4.500" height="4.500" fill="#f2f5fa" stroke="#1c2f50" stroke-width="1.200"/><rect x="8" y="8" width="4.500" height="4.500" fill="#f2f5fa" stroke="#1c2f50" stroke-width="1.200"/></g><g transform="translate(783.5 176.0)"><path d="M7 1V13M1 7H13" stroke="#2458b0" stroke-width="1.600"/><path d="M7 0L9.500 3H4.500ZM7 14L9.500 11H4.500ZM0 7L3 4.500V9.500ZM14 7L11 4.500V9.500Z" fill="#2458b0"/></g><g transform="translate(783.5 193.0)"><path d="M10.500 3.500A5 5 0 1 1 4.500 3" fill="none" stroke="#1c4a9c" stroke-width="1.900"/><path d="M3 0.500L7.500 2L4.500 5.500Z" fill="#1c4a9c"/></g><g transform="translate(783.5 210.5)"><rect x="1.500" y="1.500" width="11" height="11" fill="#cfdcee" stroke="#3c64a8" stroke-width="1.100"/><rect x="1.500" y="6.500" width="6" height="6" fill="#f2f6fb" stroke="#3c64a8" stroke-width="1"/></g><g transform="translate(783.5 227.5)"><path d="M2 1.500H7L11.500 12.500H2Z" fill="#dce6f3" stroke="#1c3f80" stroke-width="1.200"/><path d="M7 1.500V12.500" stroke="#5f83bc" stroke-width="1"/></g><g transform="translate(783.5 244.0)"><path d="M2 9L12 5" stroke="#1c3f80" stroke-width="1.200"/><path d="M8.500 1L5.500 13" stroke="#2c66c0" stroke-width="1.200"/><path d="M2 9L5 8" stroke="#7a9ad0" stroke-width="1.600"/></g><g transform="translate(783.5 261.5)"><path d="M1.500 7H9.500" stroke="#1c3f80" stroke-width="1.200"/><path d="M12 1L8.500 13" stroke="#2c66c0" stroke-width="1.200"/><path d="M6 7H9.500" stroke="#7a9ad0" stroke-width="1.600"/></g><g transform="translate(783.5 278.5)"><rect x="2" y="3.500" width="10.500" height="8" fill="#dfe8f4" stroke="#1c2f50" stroke-width="1.300"/><path d="M6 3.500H8" stroke="#ece9d8" stroke-width="2"/></g><g transform="translate(783.5 296.0)"><path d="M5 3.500H2V11.500H12.500V3.500H9.500" fill="none" stroke="#1c2f50" stroke-width="1.400"/></g><g transform="translate(783.5 312.5)"><path d="M2.500 13V5.500L6 2H12.500" fill="none" stroke="#1c3f80" stroke-width="1.300"/><path d="M2.500 5.500V2H6" fill="none" stroke="#9ab" stroke-width=".8"/></g><g transform="translate(783.5 329.5)"><path d="M2.500 13V8C2.500 4 5 2 9 2H12.500" fill="none" stroke="#1c3f80" stroke-width="1.400"/><path d="M2.500 8V2H9" fill="none" stroke="#9ab" stroke-width=".8"/></g><g transform="translate(783.5 348.5)"><path d="M2 12L6 8M8 6L12 2M3 3L6 6M8.500 8.500L11.500 11.500" stroke="#c8281c" stroke-width="2"/><circle cx="7" cy="7" r="2.200" fill="#e8842c"/><path d="M10 1.500L12.500 1L12 4" fill="#8fa8d8"/></g></svg>
<!-- MODEL / LAYOUT TABS + H SCROLLBAR -->
<div class="abs" style="left:21px;top:497px;width:737px;height:13px;background:#f1efe3"></div><div class="abs" style="left:497px;top:498px;width:261px;height:12px;background:linear-gradient(#f6f5ef,#fefefd 50%,#fdfdfb)"></div><div class="sb2" style="left:503.500px;top:498.500px;width:12px;height:11.500px"><div class="chev" style="left:4px;top:2.500px;transform:rotate(135deg)"></div></div><svg class="abs" style="left:21px;top:497px" width="170" height="14" viewBox="21 497 170 14">
<rect x="22.5" y="498.500" width="13" height="11" fill="#fbfaf6" stroke="#cfccbc" stroke-width="1"/><rect x="36.5" y="498.500" width="13" height="11" fill="#fbfaf6" stroke="#cfccbc" stroke-width="1"/><rect x="50.5" y="498.500" width="13" height="11" fill="#fbfaf6" stroke="#cfccbc" stroke-width="1"/><rect x="64.5" y="498.500" width="13" height="11" fill="#fbfaf6" stroke="#cfccbc" stroke-width="1"/><path d="M26.500 501V508" stroke="#111" stroke-width="1.300"/><path d="M32 501V508L27.500 504.500Z" fill="#111"/><path d="M45 501V508L40.500 504.500Z" fill="#111"/><path d="M55 501V508L59.500 504.500Z" fill="#111"/><path d="M68 501V508L72.500 504.500Z" fill="#111"/><path d="M73.500 501V508" stroke="#111" stroke-width="1.300"/><path d="M79 497H112.500L109 509.500H83Z" fill="#000" stroke="#222" stroke-width="1"/><path d="M112.500 497.500L109 509.500H143L147 497.500Z" fill="#f6f5ef" stroke="#555" stroke-width="1"/><path d="M147 497.500L143.500 509.500H180L184.500 497.500Z" fill="#f6f5ef" stroke="#555" stroke-width="1"/><g font-family="Noto Sans CJK SC, Liberation Sans, sans-serif" font-size="9.500"><text x="96" y="507" text-anchor="middle" fill="#fff" font-weight="bold">模型</text><text x="128" y="507" text-anchor="middle" fill="#bdbaac">布局1</text><text x="164" y="507" text-anchor="middle" fill="#bdbaac">布局2</text></g></svg>
<!-- COMMAND WINDOW -->
<div class="abs" style="left:0;top:510px;width:800px;height:50px;background:#ece9d8"></div><div class="abs" style="left:0;top:514px;width:800px;height:1.300px;background:#77746a"></div><div class="abs" style="left:0;top:515px;width:800px;height:1px;background:#fbfaf5"></div><div class="abs" style="left:7px;top:521px;width:1px;height:33px;background:#fff"></div><div class="abs" style="left:8px;top:521px;width:1px;height:33px;background:#b9b6a6"></div><div class="abs" style="left:10px;top:521px;width:1px;height:33px;background:#fff"></div><div class="abs" style="left:11px;top:521px;width:1px;height:33px;background:#b9b6a6"></div><div class="abs" style="left:12.500px;top:519px;width:782px;height:26px;background:#fff;border-top:1.500px solid #3c3a34;border-left:1.500px solid #4a483f"></div><div class="abs" style="left:12.500px;top:545px;width:768px;height:12.500px;background:#fff;border-left:1.500px solid #4a483f;border-bottom:1px solid #d8d5c6"></div><div class="abs" style="left:14px;top:544px;width:767px;height:1px;background:#9aa0ac"></div><div class="cmdl" style="top:520.300px"><b>命令:</b> _u MTEDIT</div><div class="cmdl" style="top:530.800px"><b>命令:</b></div><div class="cmdl" style="top:545.800px"><b>命令:</b></div><div class="sb2" style="left:781.500px;top:521.500px;width:12px;height:9.500px"><div class="chev" style="left:2.700px;top:3.500px;transform:rotate(-135deg);width:4px;height:4px"></div></div><div class="sb2" style="left:781.500px;top:534px;width:12px;height:9.500px"><div class="chev" style="left:2.700px;top:0.500px;width:4px;height:4px"></div></div><div class="sb2" style="left:767.500px;top:546.500px;width:12px;height:9.500px"><div class="chev" style="left:1.500px;top:2px;transform:rotate(-45deg);width:4px;height:4px"></div></div><!-- STATUS BAR -->
<div class="abs" style="left:0;top:559px;width:800px;height:17px;background:#ece9d8;border-top:1px solid #f8f7f1"></div><div class="stb sans" style="left:5px;text-align:left;letter-spacing:-.1px;font-weight:normal">燕秀字高=2.5</div><div class="stb on" style="left:65px;width:128px;background:none"></div><div class="stb mono" style="left:68px;text-align:left;font-family:'Liberation Mono',monospace;font-weight:normal;font-size:9px;letter-spacing:-.8px">795.0118, 526.0977, 0.0000</div><div class="stb" style="left:264px;width:24px">捕捉</div><div class="stb" style="left:289px;width:24px">栅格</div><div class="stb" style="left:314px;width:24px">正交</div><div class="stb on" style="left:339px;width:24px">极轴</div><div class="stb on" style="left:364px;width:42px">对象捕捉</div><div class="stb on" style="left:407px;width:43px">对象追踪</div><div class="stb" style="left:452px;width:23px">线宽</div><div class="stb on" style="left:476px;width:24px">模型</div><svg class="abs" style="left:770px;top:560px" width="30" height="16" viewBox="0 0 30 16"><circle cx="7" cy="5.500" r="3.500" fill="#8fb0d8" stroke="#4a6a9c" stroke-width=".8"/><path d="M5 9H9V13H5Z" fill="#b0b8c8" stroke="#667" stroke-width=".6"/><path d="M9.500 7L14.500 15H4.500Z" fill="#f2d21c" stroke="#6a5a10" stroke-width=".7"/><path d="M9.500 10V12.500M9.500 13.300V14.200" stroke="#111" stroke-width="1.100"/><path d="M20.500 9.500H27.500L24 13Z" fill="#111"/></svg>
<svg class="abs" style="left:672px;top:556px" width="62" height="21" viewBox="672 556 62 21"><path d="M673.500 577V564.500C680 565.500 690 563.500 700 559C712 557.500 722 559.500 730.500 558.500V577Z" fill="#245edb"/><rect x="684" y="566.500" width="12" height="6.500" rx="1" fill="#d9d5c8" stroke="#3a3a3a" stroke-width=".8"/><path d="M686 569H694M686 571H694" stroke="#555" stroke-width=".7"/><rect x="701.500" y="563.500" width="9" height="10" fill="#fff" stroke="#222" stroke-width=".8"/><text x="706" y="572" text-anchor="middle" font-family="Liberation Sans, sans-serif" font-weight="bold" font-size="9" fill="#111">?</text><path d="M722.500 564.500H726.500M722.500 571.500H726.500L724.500 573.500Z" stroke="#e6ecfb" fill="#e6ecfb" stroke-width="1"/></svg>
<!-- TASKBAR SLIVER -->
<div class="abs" style="left:0;top:576px;width:800px;height:4px;background:linear-gradient(#3b78e6,#2a62d8)"></div><div class="abs" style="left:0;top:576px;width:73px;height:4px;background:linear-gradient(#4fae4c,#3c963a)"></div><div class="abs" style="left:712px;top:576px;width:88px;height:4px;background:linear-gradient(#2ea0ec,#1c8ce0)"></div>
<!-- TEXT FORMATTING DIALOG -->
<div id="dlg" class="abs">
  <div class="abs ttl"><b>文字格式</b></div>
  <div class="xcb mono" style="left:3px;width:84px;padding-left:2px">Standard<u><span class="chev"></span></u></div>
  <div class="xcb mono" style="left:89px;width:116px;padding-left:16px">GDT<u><span class="chev"></span></u><svg class="abs" style="left:2px;top:2px" width="11" height="11" viewBox="0 0 11 11"><path d="M3.500 1.200a1.200 1.200 0 1 0 0.010 0M3.500 3.600L1 9.500M3.500 3.600L6 9.500M1.800 7H5.200M0.300 9.800H2M5 9.800H6.800" stroke="#222" stroke-width="1.200" fill="none"/><path d="M7 4.500L8.500 0.800L10 4.500M7.600 3.200H9.400" stroke="#222" stroke-width="1" fill="none"/></svg></div>
  <div class="xcb mono" style="left:206px;width:50px;padding-left:2px;letter-spacing:-.3px">2.5<u><span class="chev"></span></u></div>
  <div class="abs" style="left:260.500px;top:19px;width:10px;font-family:'Liberation Serif',serif;font-weight:bold;font-size:11px;line-height:13px;color:#b9b6a6;text-align:center">B</div>
  <div class="abs" style="left:279px;top:19px;width:10px;font-family:'Liberation Serif',serif;font-style:italic;font-size:11px;line-height:13px;color:#b9b6a6;text-align:center">I</div>
  <div class="abs" style="left:296px;top:19px;width:11px;font-family:'Liberation Serif',serif;font-weight:bold;font-size:11px;line-height:13px;color:#111;text-align:center;text-decoration:underline">U</div>
  <svg class="abs" style="left:314px;top:20px" width="54" height="12" viewBox="0 0 54 12" fill="none" stroke="#c2bfb0" stroke-width="1.2"><path d="M3 5.500C5 2.500 9 2.500 10 5.500C10.500 8 8 9.500 6 9.500M3 5.500V2.200M3 5.500H6.300"/><path d="M29.500 5.500C27.500 2.500 23.500 2.500 22.500 5.500C22 8 24.500 9.500 26.500 9.500M29.500 5.500V2.200M29.500 5.500H26.200"/><path d="M42 2.500H46M41 6H47M42 9.500H46" stroke-width="1.400"/></svg>
  <div class="abs" style="left:369px;top:17px;width:28.500px;height:16px;background:#fff;border:1px solid #8ba0c4"><div class="abs" style="left:3px;top:3px;width:11px;height:9px;background:#19e619;border:1px solid #222"></div><div class="abs" style="right:0;top:0;width:11px;height:14px;background:linear-gradient(#d5e0fb,#b9c9f3)"><span class="chev" style="left:2.8px;top:2.5px"></span></div></div>
  <div class="abs sans" style="left:411px;top:18px;font-size:9.5px;line-height:14px;color:#111;font-weight:bold;letter-spacing:-.3px">确定</div>
</div>
<!-- FONT DROPDOWN LIST -->
<div id="lst" class="abs mono"><div class="it sel" style="top:1.0px">GDT</div><svg class="abs" style="left:2px;top:1.0px" width="11" height="11" viewBox="0 0 11 11"><path d="M3.500 1.200a1.200 1.200 0 1 0 0.010 0M3.500 3.600L1 9.500M3.500 3.600L6 9.500M1.800 7H5.200M0.300 9.800H2M5 9.800H6.800" stroke="#dfe8ff" stroke-width="1.200" fill="none"/><path d="M7 4.500L8.500 0.800L10 4.500M7.600 3.200H9.400" stroke="#dfe8ff" stroke-width="1" fill="none"/></svg><div class="it" style="top:11.8px">Georgia</div><div class="abs" style="left:3px;top:10.8px;font-family:'Liberation Serif',serif;font-weight:bold;font-size:11px;line-height:12px;letter-spacing:0">T</div><div class="it" style="top:22.7px">GothicE</div><svg class="abs" style="left:2px;top:22.7px" width="11" height="11" viewBox="0 0 11 11"><path d="M3.500 1.200a1.200 1.200 0 1 0 0.010 0M3.500 3.600L1 9.500M3.500 3.600L6 9.500M1.800 7H5.200M0.300 9.800H2M5 9.800H6.800" stroke="#222" stroke-width="1.200" fill="none"/><path d="M7 4.500L8.500 0.800L10 4.500M7.600 3.200H9.400" stroke="#222" stroke-width="1" fill="none"/></svg><div class="it" style="top:33.5px">GothicG</div><svg class="abs" style="left:2px;top:33.5px" width="11" height="11" viewBox="0 0 11 11"><path d="M3.500 1.200a1.200 1.200 0 1 0 0.010 0M3.500 3.600L1 9.500M3.500 3.600L6 9.500M1.800 7H5.200M0.300 9.800H2M5 9.800H6.800" stroke="#222" stroke-width="1.200" fill="none"/><path d="M7 4.500L8.500 0.800L10 4.500M7.600 3.200H9.400" stroke="#222" stroke-width="1" fill="none"/></svg><div class="it" style="top:44.4px">GothicI</div><svg class="abs" style="left:2px;top:44.4px" width="11" height="11" viewBox="0 0 11 11"><path d="M3.500 1.200a1.200 1.200 0 1 0 0.010 0M3.500 3.600L1 9.500M3.500 3.600L6 9.500M1.800 7H5.200M0.300 9.800H2M5 9.800H6.800" stroke="#222" stroke-width="1.200" fill="none"/><path d="M7 4.500L8.500 0.800L10 4.500M7.600 3.200H9.400" stroke="#222" stroke-width="1" fill="none"/></svg><div class="it" style="top:55.2px">GreekC</div><svg class="abs" style="left:2px;top:55.2px" width="11" height="11" viewBox="0 0 11 11"><path d="M3.500 1.200a1.200 1.200 0 1 0 0.010 0M3.500 3.600L1 9.500M3.500 3.600L6 9.500M1.800 7H5.200M0.300 9.800H2M5 9.800H6.800" stroke="#222" stroke-width="1.200" fill="none"/><path d="M7 4.500L8.500 0.800L10 4.500M7.600 3.200H9.400" stroke="#222" stroke-width="1" fill="none"/></svg><div class="it" style="top:66.1px">GreekS</div><svg class="abs" style="left:2px;top:66.1px" width="11" height="11" viewBox="0 0 11 11"><path d="M3.500 1.200a1.200 1.200 0 1 0 0.010 0M3.500 3.600L1 9.500M3.500 3.600L6 9.500M1.800 7H5.200M0.300 9.800H2M5 9.800H6.800" stroke="#222" stroke-width="1.200" fill="none"/><path d="M7 4.500L8.500 0.800L10 4.500M7.600 3.200H9.400" stroke="#222" stroke-width="1" fill="none"/></svg><div class="abs" style="left:123px;top:0;width:13px;height:76px;background:#f4f3ee"></div><div class="sbtn" style="left:123.5px;top:1px;width:12px;height:12px"><div class="chev" style="left:2.7px;top:4px;transform:rotate(-135deg)"></div></div><div class="sbtn" style="left:123.5px;top:63.5px;width:12px;height:12px"><div class="chev" style="left:2.7px;top:1px"></div></div><div class="sbtn" style="left:123.5px;top:26px;width:12px;height:7px"></div></div>
<!-- MTEXT EDITOR -->
<div class="abs" style="left:220px;top:305px;width:122px;height:59px;border:1px solid #d8d8d8;border-top:none"></div>
<div class="abs" style="left:216px;top:284px;width:130px;height:22px;background:#ece9d8;border:1px solid #f8f7f2;border-right-color:#cfccbd;border-bottom-color:#cfccbd"></div>
<div class="abs" style="left:220px;top:289px;width:106px;height:13px;background:#fff;border:1px solid #9d9a8c"></div>
<svg class="abs" style="left:216px;top:284px" width="130" height="22" viewBox="0 0 130 22"><path d="M14.2 10.800v1.600M23.6 10.800v1.600M33.1 10.800v1.600M42.5 9.500v3.500M52.0 10.800v1.600M61.5 10.800v1.600M70.9 10.800v1.600M80.3 9.500v3.500M89.8 10.800v1.600M99.2 10.800v1.600" stroke="#333" stroke-width="1.100"/><path d="M3.500 6.500H10.500L7 11Z" fill="#fff" stroke="#222" stroke-width="1"/><path d="M7 11V15" stroke="#222"/><rect x="4.500" y="15.500" width="5" height="3" fill="#fff" stroke="#222"/></svg>
<div class="abs" style="left:222.5px;top:307px;width:9px;height:16.500px;background:#2c55a9"></div>
<div class="abs mono" style="left:223px;top:307px;font-size:13.6px;line-height:16px;white-space:pre;color:#11862a;letter-spacing:.35px"><span style="color:#b9ccf2">v</span>%%c40x10</div>
<!-- RED ANNOTATION -->
<svg class="abs" style="left:150px;top:195px" width="120" height="150" viewBox="150 195 120 150"><circle cx="227.100" cy="316.300" r="19.700" fill="none" stroke="#e7262b" stroke-width="2.200"/><path d="M186.200 206.500L185.300 219.800L190.800 218.500L207.600 302.500L209.200 302.200L195.300 217.500L198.600 216.500Z" fill="#ea2d31"/></svg>
</body>
</html>
